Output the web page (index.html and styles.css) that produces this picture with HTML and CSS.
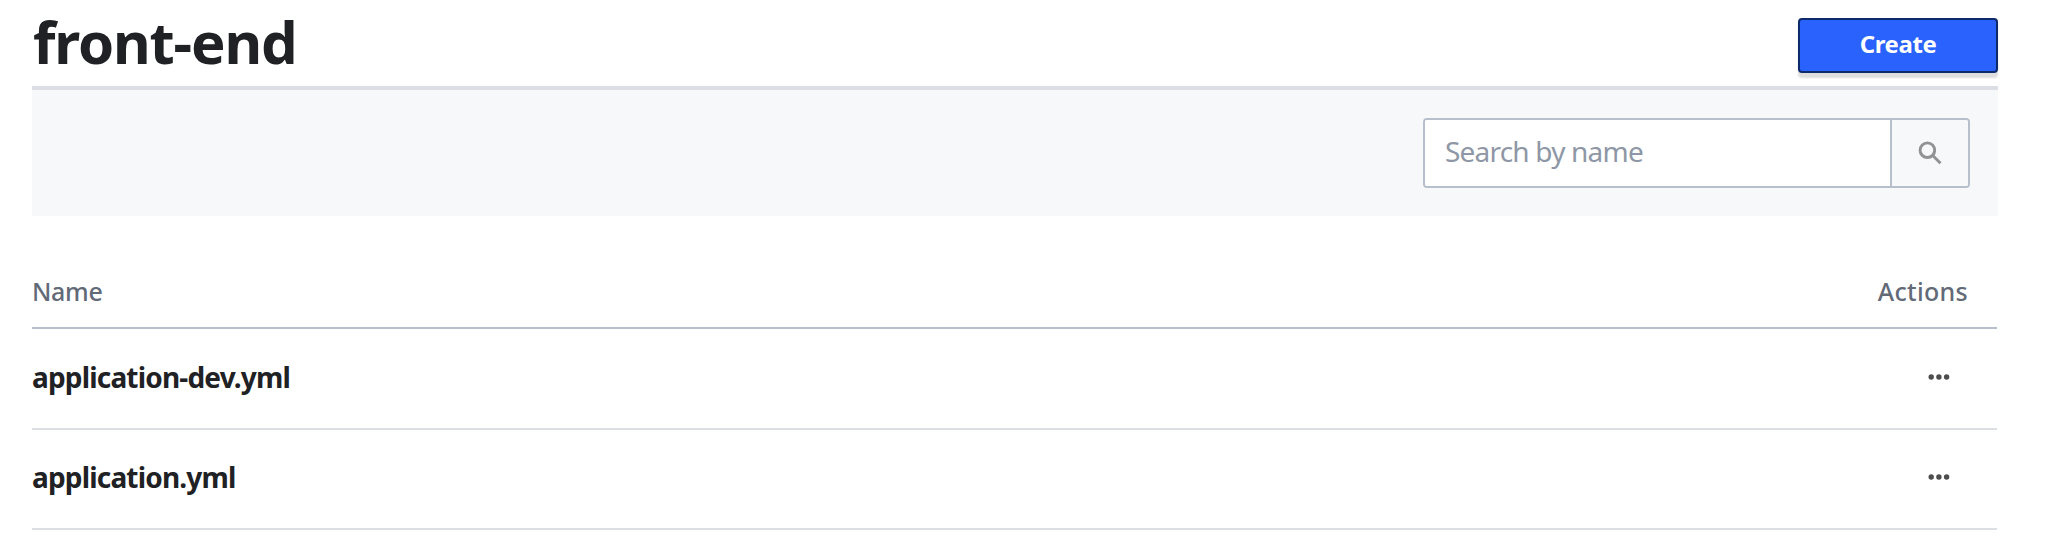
FILE: index.html
```html
<!DOCTYPE html>
<html lang="en">
<head>
<meta charset="utf-8">
<title>front-end</title>
<link rel="stylesheet" href="styles.css">
</head>
<body>
<main class="page">
  <header class="page-header">
    <h1 class="title">front-end</h1>
    <button class="create" type="button">Create</button>
  </header>
  <section class="toolbar">
    <form class="search">
      <input class="search-input" type="text" placeholder="Search by name" aria-label="Search by name">
      <button class="search-button" type="button" aria-label="Search">
        <svg width="24" height="24" viewBox="0 0 24 24" fill="none" stroke="#929292" stroke-width="2.9"><circle cx="9.4" cy="9.2" r="7.3"/><path d="M14.7 14.5l7.8 7.8"/></svg>
      </button>
    </form>
  </section>
  <section class="list">
    <div class="row head"><span class="head-name">Name</span><span class="head-actions">Actions</span></div>
    <div class="row first"><span class="name">application-dev.yml</span>
      <svg class="dots" width="22" height="6" viewBox="0 0 22 6" fill="#4d4d4d"><circle cx="3.2" cy="3" r="2.7"/><circle cx="10.9" cy="3" r="2.7"/><circle cx="18.6" cy="3" r="2.7"/></svg></div>
    <div class="row"><span class="name">application.yml</span>
      <svg class="dots" width="22" height="6" viewBox="0 0 22 6" fill="#4d4d4d"><circle cx="3.2" cy="3" r="2.7"/><circle cx="10.9" cy="3" r="2.7"/><circle cx="18.6" cy="3" r="2.7"/></svg></div>
  </section>
</main>
</body>
</html>
```
FILE: styles.css
```css
* { box-sizing: border-box; }
body { margin: 0; background: #fff; color: #202124; font-family: "Noto Sans", sans-serif; }
.page { padding: 0 48px 0 32px; }
.page-header { display: flex; justify-content: space-between; height: 90px; border-bottom: 4px solid #dcdee6; }
.title { margin: 0; padding-left: 1px; font-size: 58px; line-height: 83px; font-weight: 700; letter-spacing: -1.15px; }
.create { width: 200px; height: 55px; margin-top: 18px; padding: 0 0 3px; border: 2px solid #0d2a6b; border-radius: 4px; background: #2962fc; box-shadow: 0 5px 2px #dedede; color: #fff; font: 700 24px/48px "Noto Sans", sans-serif; letter-spacing: -0.4px; }
.toolbar { display: flex; justify-content: flex-end; height: 126px; padding: 28px 28px 0 0; background: #f7f8fa; }
.search { display: flex; width: 547px; height: 70px; border: 2px solid #b8bfcc; border-radius: 4px; overflow: hidden; }
.search-input { flex: 1; min-width: 0; border: 0; border-right: 2px solid #b8bfcc; padding: 0 20px 4px; background: #fff; outline: 0; font: 400 28px "Noto Sans", sans-serif; letter-spacing: -0.8px; }
.search-input::placeholder { color: #8e97a5; opacity: 1; }
.search-button { display: flex; align-items: center; justify-content: center; width: 76px; padding: 0; border: 0; background: #f7f8fa; }
.list { margin: 36px 1px 0 0; }
.row { display: flex; justify-content: space-between; height: 100px; border-bottom: 2px solid #dce0e5; line-height: 95px; }
.first { height: 101px; line-height: 97px; }
.head { height: 77px; border-color: #b8bfcc; color: #626a78; font-size: 25px; font-weight: 500; line-height: 79px; }
.head-name { letter-spacing: -0.3px; }
.head-actions { margin-right: 29px; letter-spacing: 0.3px; }
.name { font-size: 28px; font-weight: 700; letter-spacing: -0.82px; }
.dots { margin: 44px 47px 0 0; }
.first .dots { margin-top: 45px; }
```
